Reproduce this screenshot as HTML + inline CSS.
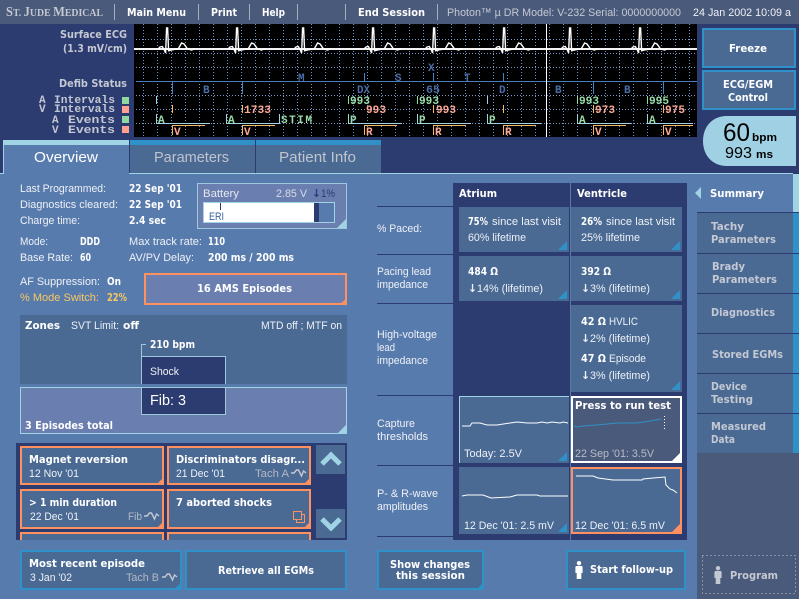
<!DOCTYPE html>
<html><head><meta charset="utf-8"><title>Photon DR</title>
<style>
html,body{margin:0;padding:0;background:#587bae;overflow:hidden}
svg{display:block}
text{font-family:"Liberation Sans",sans-serif;font-size:11px;fill:#eef1f6}
.b{font-family:"DejaVu Sans",sans-serif;font-size:11px;font-weight:bold;fill:#fff}
.g{fill:#c4c8d2}
.gb{font-family:"DejaVu Sans",sans-serif;font-size:11px;font-weight:bold;fill:#c4c8d2}
.l{font-family:"Liberation Mono",monospace;font-weight:bold;font-size:11px;fill:#c4c8d2}
.m{font-family:"Liberation Mono",monospace;font-weight:bold;font-size:11px}
.mb{fill:#4a6ea8}.mg{fill:#98dca8}.mp{fill:#ffa898}
.a{font-family:"DejaVu Sans",sans-serif;font-weight:bold}
rect,line{shape-rendering:crispEdges}
</style></head><body>
<svg xmlns="http://www.w3.org/2000/svg" width="799" height="599" viewBox="0 0 799 599">
<defs>
<pattern id="gv" x="143" y="24" width="14" height="3" patternUnits="userSpaceOnUse"><rect width="1" height="1" fill="#6f96cc"/></pattern>
<pattern id="gh" x="136" y="39" width="3" height="14" patternUnits="userSpaceOnUse"><rect width="1" height="1" fill="#7f9ac4"/></pattern>
<polyline id="beat" fill="none" stroke="#fff" stroke-width="1.4" points="-9,48.700 -7.300,47 -5,46.500 -3,50 -1.700,53 -0.700,28 0.300,28 1.300,50.700 4.300,50 11,48.700 14.300,43 16.700,44 20,48.700 24,50 28,48.700"/>
<polyline id="wave" fill="none" stroke-width="1.400" points="0,5 3,5 5.500,2 7.500,2 10.500,8 12.500,3 15,5"/>
<path id="person" d="M4 0a2.200 2.200 0 1 1-.01 0zM1 5h6l.6 1v6H6.300v6H1.700v-6H.4V6z"/>
</defs>
<rect width="799" height="599" fill="#587bae"/>
<!-- top bar -->
<rect width="799" height="24" fill="#4a5a7a"/>
<g fill="#a8aebc"><rect x="114" y="4" width="1" height="16"/><rect x="198" y="4" width="1" height="16"/><rect x="249" y="4" width="1" height="16"/><rect x="297" y="4" width="1" height="16"/><rect x="345" y="4" width="1" height="16"/><rect x="437" y="4" width="1" height="16"/></g>
<text x="6" y="16" textLength="97" lengthAdjust="spacingAndGlyphs" style="font-family:'Liberation Serif',serif;font-size:11px;font-weight:bold;fill:#c4c8d2"><tspan font-size="14">S</tspan>T. <tspan font-size="14">J</tspan>UDE <tspan font-size="14">M</tspan>EDICAL</text>
<text class="b" x="127" y="16" textLength="59" lengthAdjust="spacingAndGlyphs">Main Menu</text>
<text class="b" x="211" y="16" textLength="26" lengthAdjust="spacingAndGlyphs">Print</text>
<text class="b" x="262" y="16" textLength="23" lengthAdjust="spacingAndGlyphs">Help</text>
<text class="b" x="358" y="16" textLength="67" lengthAdjust="spacingAndGlyphs">End Session</text>
<text class="g" x="447" y="16" textLength="234" lengthAdjust="spacingAndGlyphs">Photon™ µ DR Model: V-232 Serial: 0000000000</text>
<text x="693" y="16" textLength="98" lengthAdjust="spacingAndGlyphs">24 Jan 2002 10:09 a</text>
<!-- band -->
<rect y="24" width="799" height="150" fill="#2d3c70"/>
<text class="gb" x="60" y="38" textLength="67" lengthAdjust="spacingAndGlyphs">Surface ECG</text>
<text class="gb" x="63" y="52" textLength="64" lengthAdjust="spacingAndGlyphs">(1.3 mV/cm)</text>
<text class="gb" x="59" y="87" textLength="68" lengthAdjust="spacingAndGlyphs">Defib Status</text>
<text class="l" x="39" y="103">A</text><text class="l" x="54" y="103" textLength="61" lengthAdjust="spacingAndGlyphs">Intervals</text>
<text class="l" x="39" y="112">V</text><text class="l" x="54" y="112" textLength="61" lengthAdjust="spacingAndGlyphs">Intervals</text>
<text class="l" x="52" y="123">A</text><text class="l" x="68" y="123" textLength="47" lengthAdjust="spacingAndGlyphs">Events</text>
<text class="l" x="52" y="133">V</text><text class="l" x="68" y="133" textLength="47" lengthAdjust="spacingAndGlyphs">Events</text>
<rect x="122" y="97" width="7" height="7" fill="#90d8a0"/><rect x="122" y="106" width="7" height="7" fill="#ffa090"/><rect x="122" y="116" width="7" height="7" fill="#90d8a0"/><rect x="122" y="126" width="7" height="7" fill="#ffa090"/>
<!-- ECG panel -->
<rect x="134" y="24" width="563" height="113" fill="#000"/>
<rect x="136" y="30" width="561" height="107" fill="url(#gh)"/>
<rect x="136" y="24" width="561" height="113" fill="url(#gv)"/>
<rect x="134" y="48" width="563" height="2" fill="#fff" opacity=".95"/>
<use href="#beat" x="167.300"/><use href="#beat" x="237.300"/><use href="#beat" x="303.300"/><use href="#beat" x="373.300"/><use href="#beat" x="434.300"/><use href="#beat" x="504.300"/><use href="#beat" x="570.300"/><use href="#beat" x="640.300"/>
<rect x="136" y="81" width="561" height="1" fill="#4a80c0"/>
<g fill="#3f86c8"><rect x="364" y="73" width="1" height="9"/><rect x="433" y="73" width="1" height="9"/><rect x="503" y="73" width="1" height="9"/><rect x="172" y="82" width="1" height="12"/><rect x="242" y="82" width="1" height="12"/><rect x="593" y="82" width="1" height="12"/><rect x="663" y="82" width="1" height="12"/></g>
<rect x="546" y="24" width="1" height="113" fill="#fff"/>
<g>
<text class="m mb" x="298" y="81">M</text><text class="m mb" x="395" y="81">S</text><text class="m mb" x="428" y="71">X</text><text class="m mb" x="464" y="81">T</text>
<text class="m mb" x="203" y="93">B</text><text class="m mb" x="357" y="93" textLength="13" lengthAdjust="spacingAndGlyphs">DX</text><text class="m mb" x="426" y="93" textLength="14" lengthAdjust="spacingAndGlyphs">65</text><text class="m mb" x="499" y="93">D</text><text class="m mb" x="555" y="93">B</text><text class="m mb" x="624" y="93">B</text>
<text class="m mg" x="350" y="104" textLength="20" lengthAdjust="spacingAndGlyphs">993</text><text class="m mg" x="419" y="104" textLength="20" lengthAdjust="spacingAndGlyphs">993</text><text class="m mg" x="579" y="104" textLength="20" lengthAdjust="spacingAndGlyphs">993</text><text class="m mg" x="649" y="104" textLength="20" lengthAdjust="spacingAndGlyphs">995</text>
<text class="m mp" x="244" y="113" textLength="27" lengthAdjust="spacingAndGlyphs">1733</text><text class="m mp" x="366" y="113" textLength="20" lengthAdjust="spacingAndGlyphs">993</text><text class="m mp" x="436" y="113" textLength="20" lengthAdjust="spacingAndGlyphs">993</text><text class="m mp" x="595" y="113" textLength="20" lengthAdjust="spacingAndGlyphs">973</text><text class="m mp" x="665" y="113" textLength="20" lengthAdjust="spacingAndGlyphs">975</text>
<text class="m mg" x="158" y="123">A</text><text class="m mg" x="228" y="123">A</text><text class="m mg" x="281" y="123" textLength="31" lengthAdjust="spacing">STIM</text><text class="m mg" x="350" y="123">P</text><text class="m mg" x="419" y="123">P</text><text class="m mg" x="489" y="123">P</text><text class="m mg" x="579" y="123">A</text><text class="m mg" x="649" y="123">A</text>
<text class="m mp" x="174" y="135">V</text><text class="m mp" x="244" y="135">V</text><text class="m mp" x="366" y="135">R</text><text class="m mp" x="435" y="135">R</text><text class="m mp" x="505" y="135">R</text><text class="m mp" x="595" y="135">V</text><text class="m mp" x="665" y="135">V</text>
</g>
<g fill="#a0d4e4">
<rect x="156" y="96" width="1" height="8"/><rect x="487" y="96" width="1" height="8"/>
<rect x="156" y="114" width="1" height="9"/><rect x="156" y="123" width="54" height="1"/>
<rect x="226" y="114" width="1" height="9"/><rect x="226" y="123" width="54" height="1"/><rect x="279" y="114" width="1" height="9"/>
<rect x="348" y="114" width="1" height="9"/><rect x="348" y="123" width="54" height="1"/>
<rect x="417" y="114" width="1" height="9"/><rect x="417" y="123" width="54" height="1"/>
<rect x="487" y="114" width="1" height="9"/><rect x="487" y="123" width="54" height="1"/>
<rect x="577" y="114" width="1" height="9"/><rect x="577" y="123" width="54" height="1"/>
<rect x="647" y="114" width="1" height="9"/><rect x="647" y="123" width="46" height="1"/>
</g>
<g fill="#90d8a0"><rect x="348" y="96" width="1" height="8"/><rect x="417" y="96" width="1" height="8"/><rect x="577" y="96" width="1" height="8"/><rect x="647" y="96" width="1" height="8"/></g>
<g fill="#f8b860">
<rect x="172" y="105" width="1" height="8"/><rect x="503" y="105" width="1" height="8"/>
<rect x="242" y="105" width="1" height="8"/><rect x="433" y="105" width="1" height="8"/><rect x="593" y="105" width="1" height="8"/><rect x="663" y="105" width="1" height="8"/>
<rect x="172" y="125" width="1" height="10"/><rect x="172" y="125" width="33" height="1"/>
<rect x="242" y="125" width="1" height="10"/><rect x="242" y="125" width="33" height="1"/>
<rect x="364" y="125" width="1" height="10"/><rect x="364" y="125" width="33" height="1"/>
<rect x="433" y="125" width="1" height="10"/><rect x="433" y="125" width="33" height="1"/>
<rect x="503" y="125" width="1" height="10"/><rect x="503" y="125" width="33" height="1"/>
<rect x="593" y="125" width="1" height="10"/><rect x="593" y="125" width="33" height="1"/>
<rect x="663" y="125" width="1" height="10"/><rect x="663" y="125" width="30" height="1"/>
</g>
<!-- Right controls -->
<rect x="703" y="29" width="92" height="38" fill="#4a6a94" stroke="#3090c8" stroke-width="2"/>
<text class="b" x="729" y="52" textLength="38" lengthAdjust="spacingAndGlyphs">Freeze</text>
<rect x="703" y="71" width="92" height="38" fill="#4a6a94" stroke="#3090c8" stroke-width="2"/>
<text class="b" x="723" y="88" textLength="50" lengthAdjust="spacingAndGlyphs">ECG/EGM</text>
<text class="b" x="728" y="101" textLength="40" lengthAdjust="spacingAndGlyphs">Control</text>
<path d="M727 116H796V166H727C712 166 703 155 703 141C703 127 712 116 727 116Z" fill="#a0d0e4"/>
<text x="723" y="141" textLength="27" lengthAdjust="spacingAndGlyphs" style="font-size:25px;fill:#000">60</text>
<text x="752" y="141" textLength="25" lengthAdjust="spacingAndGlyphs" style="font-size:11px;font-weight:bold;fill:#000">bpm</text>
<text x="725" y="158" textLength="27" lengthAdjust="spacingAndGlyphs" style="font-size:16px;fill:#000">993</text>
<text x="756" y="158" textLength="17" lengthAdjust="spacingAndGlyphs" style="font-size:11px;font-weight:bold;fill:#000">ms</text>
<!-- Tabs -->
<rect x="0" y="173" width="793" height="1" fill="#a0d4e4"/>
<rect x="3" y="140" width="126" height="34" fill="#587bae"/>
<rect x="3" y="140" width="126" height="5" fill="#a0d4e4"/>
<rect x="3" y="145" width="1" height="29" fill="#a0d4e4"/>
<rect x="130" y="140" width="125" height="33" fill="#4a6a94"/><rect x="130" y="140" width="125" height="5" fill="#3090c8"/>
<rect x="256" y="140" width="125" height="33" fill="#4a6a94"/><rect x="256" y="140" width="125" height="5" fill="#3090c8"/>
<text x="34" y="162" textLength="64" lengthAdjust="spacingAndGlyphs" style="font-size:14.500px;fill:#fff">Overview</text>
<text x="154" y="162" textLength="75" lengthAdjust="spacingAndGlyphs" style="font-size:14.500px;fill:#c0c4cc">Parameters</text>
<text x="279" y="162" textLength="77" lengthAdjust="spacingAndGlyphs" style="font-size:14.500px;fill:#c0c4cc">Patient Info</text>
<!-- Summary text -->
<text x="20" y="192" textLength="86" lengthAdjust="spacingAndGlyphs">Last Programmed:</text><text class="b" x="129" y="192" textLength="53" lengthAdjust="spacingAndGlyphs">22 Sep '01</text>
<text x="20" y="208" textLength="98" lengthAdjust="spacingAndGlyphs">Diagnostics cleared:</text><text class="b" x="129" y="208" textLength="53" lengthAdjust="spacingAndGlyphs">22 Sep '01</text>
<text x="20" y="224" textLength="60" lengthAdjust="spacingAndGlyphs">Charge time:</text><text class="b" x="129" y="224" textLength="37" lengthAdjust="spacingAndGlyphs">2.4 sec</text>
<text x="20" y="245" textLength="28" lengthAdjust="spacingAndGlyphs">Mode:</text><text class="b" x="80" y="245" textLength="20" lengthAdjust="spacingAndGlyphs">DDD</text>
<text x="129" y="245" textLength="73" lengthAdjust="spacingAndGlyphs">Max track rate:</text><text class="b" x="208" y="245" textLength="17" lengthAdjust="spacingAndGlyphs">110</text>
<text x="20" y="261" textLength="53" lengthAdjust="spacingAndGlyphs">Base Rate:</text><text class="b" x="80" y="261" textLength="11" lengthAdjust="spacingAndGlyphs">60</text>
<text x="129" y="261" textLength="65" lengthAdjust="spacingAndGlyphs">AV/PV Delay:</text><text class="b" x="208" y="261" textLength="86" lengthAdjust="spacingAndGlyphs">200 ms / 200 ms</text>
<text x="20" y="285" textLength="80" lengthAdjust="spacingAndGlyphs">AF Suppression:</text><text class="b" x="107" y="285" textLength="14" lengthAdjust="spacingAndGlyphs">On</text>
<text x="20" y="301" textLength="79" lengthAdjust="spacingAndGlyphs" style="fill:#f8c860">% Mode Switch:</text><text class="b" x="107" y="301" textLength="20" lengthAdjust="spacingAndGlyphs" style="fill:#f8c860">22%</text>
<!-- Battery -->
<rect x="197.500" y="183.500" width="149" height="45" fill="#6a7eb0" stroke="#a0c8dc"/>
<path d="M346 219v9h-9z" fill="#a0d4e4"/>
<text x="203" y="197" textLength="36" lengthAdjust="spacingAndGlyphs" style="fill:#e4e8f0">Battery</text>
<text x="276" y="197" textLength="31" lengthAdjust="spacingAndGlyphs" style="fill:#d8dce8">2.85 V</text>
<text class="a" x="312" y="197" textLength="9" lengthAdjust="spacingAndGlyphs" style="fill:#2d3c70;font-size:11px">↓</text>
<text x="321" y="197" textLength="14" lengthAdjust="spacingAndGlyphs" style="fill:#2d3c70">1%</text>
<rect x="203.500" y="202.500" width="131" height="20" fill="#587bae" stroke="#a0d4e4"/>
<rect x="204" y="203" width="110" height="19" fill="#fff"/><rect x="314" y="203" width="5" height="19" fill="#2d3c70"/>
<rect x="220" y="203" width="1" height="7" fill="#2d3c70"/>
<text x="209" y="220" textLength="15" lengthAdjust="spacingAndGlyphs" style="fill:#3a62a0">ERI</text>
<!-- AMS -->
<rect x="145" y="274" width="201" height="30" fill="#6a7eb0" stroke="#ff9060" stroke-width="2"/>
<path d="M346 299v5h-6z" fill="#ff9060"/>
<text class="b" x="197" y="292" textLength="95" lengthAdjust="spacingAndGlyphs">16 AMS Episodes</text>
<!-- Zones -->
<rect x="20" y="315" width="327" height="69" fill="#4a6a94"/>
<text class="b" x="25" y="329" textLength="35" lengthAdjust="spacingAndGlyphs">Zones</text>
<text x="71" y="329" textLength="48" lengthAdjust="spacingAndGlyphs">SVT Limit:</text><text class="b" x="123" y="329" textLength="16" lengthAdjust="spacingAndGlyphs">off</text>
<text x="261" y="329" textLength="81" lengthAdjust="spacingAndGlyphs">MTD off ; MTF on</text>
<text class="b" x="150" y="348" textLength="45" lengthAdjust="spacingAndGlyphs">210 bpm</text>
<rect x="142" y="344" width="4" height="1" fill="#a0c8dc"/><rect x="141" y="344" width="1" height="12" fill="#a0c8dc"/>
<rect x="20.500" y="387.500" width="326" height="46" fill="#6a7eb0" stroke="#a0d4e4"/>
<path d="M346 425v8h-8z" fill="#a0d4e4"/>
<rect x="141.500" y="356.500" width="84" height="28" fill="#2d3c70" stroke="#a0c8dc"/>
<rect x="141" y="384" width="85" height="3" fill="#587bae"/>
<rect x="141.500" y="387.500" width="84" height="27" fill="#2d3c70" stroke="#a0c8dc"/>
<text x="150" y="375" textLength="29" lengthAdjust="spacingAndGlyphs">Shock</text>
<text x="150" y="405" textLength="36" lengthAdjust="spacingAndGlyphs" style="font-size:15px;fill:#fff">Fib: 3</text>
<text class="b" x="25" y="429" textLength="88" lengthAdjust="spacingAndGlyphs">3 Episodes total</text>
<!-- Episode list -->
<rect x="16" y="443" width="331" height="97" fill="#2d3c70"/>
<g fill="#4a6a94" stroke="#ff9060" stroke-width="2">
<rect x="21" y="447" width="142" height="37"/><rect x="168" y="447" width="142" height="37"/>
<rect x="21" y="490" width="142" height="38"/><rect x="168" y="490" width="142" height="38"/>
</g>
<rect x="20" y="532" width="144" height="8" fill="#ff9060"/><rect x="22" y="534" width="140" height="6" fill="#4a6a94"/>
<rect x="167" y="532" width="144" height="8" fill="#ff9060"/><rect x="169" y="534" width="140" height="6" fill="#4a6a94"/>
<g fill="#ff9060"><path d="M163 478v6h-6z"/><path d="M310 478v6h-6z"/><path d="M163 522v6h-6z"/><path d="M310 522v6h-6z"/></g>
<text class="b" x="29" y="463" textLength="99" lengthAdjust="spacingAndGlyphs">Magnet reversion</text><text x="29" y="477" textLength="50" lengthAdjust="spacingAndGlyphs">12 Nov '01</text>
<text class="b" x="176" y="463" textLength="129" lengthAdjust="spacingAndGlyphs">Discriminators disagr...</text><text x="176" y="477" textLength="49" lengthAdjust="spacingAndGlyphs">21 Dec '01</text>
<text x="255" y="477" textLength="34" lengthAdjust="spacingAndGlyphs" style="fill:#b4b8c4">Tach A</text><use href="#wave" x="291" y="468" stroke="#c4c8d2"/>
<text class="b" x="29" y="506" textLength="88" lengthAdjust="spacingAndGlyphs">&gt; 1 min duration</text><text x="30" y="520" textLength="49" lengthAdjust="spacingAndGlyphs">22 Dec '01</text>
<text x="128" y="520" textLength="14" lengthAdjust="spacingAndGlyphs" style="fill:#b4b8c4">Fib</text><use href="#wave" x="144" y="511" stroke="#c4c8d2"/>
<text class="b" x="176" y="506" textLength="96" lengthAdjust="spacingAndGlyphs">7 aborted shocks</text>
<g fill="none" stroke="#ff9060"><rect x="293.500" y="511.500" width="8" height="8"/><path d="M301.500 514.500h3v8h-8v-3"/></g>
<rect x="316" y="445" width="29" height="29" fill="#4a6a94"/><rect x="316" y="509" width="29" height="29" fill="#4a6a94"/>
<path d="M322 464l9-9 9 9" fill="none" stroke="#a0d4e4" stroke-width="5"/>
<path d="M322 519l9 9 9-9" fill="none" stroke="#a0d4e4" stroke-width="5"/>
<!-- bottom left buttons -->
<rect x="21" y="551" width="160" height="38" fill="#4a6a94" stroke="#3090c8" stroke-width="2"/><path d="M181 583v6h-7z" fill="#3090c8"/>
<text class="b" x="29" y="567" textLength="116" lengthAdjust="spacingAndGlyphs">Most recent episode</text><text x="30" y="581" textLength="42" lengthAdjust="spacingAndGlyphs">3 Jan '02</text>
<text x="126" y="581" textLength="33" lengthAdjust="spacingAndGlyphs" style="fill:#b4b8c4">Tach B</text><use href="#wave" x="162" y="572" stroke="#c4c8d2"/>
<rect x="186" y="551" width="160" height="38" fill="#4a6a94" stroke="#3090c8" stroke-width="2"/>
<text class="b" x="218" y="574" textLength="96" lengthAdjust="spacingAndGlyphs">Retrieve all EGMs</text>
<!-- Table -->
<rect x="453" y="183" width="234" height="357" fill="#2d3c70"/>
<rect x="570" y="183" width="1" height="357" fill="#587bae"/>
<text class="b" x="459" y="197" textLength="38" lengthAdjust="spacingAndGlyphs">Atrium</text><text class="b" x="577" y="197" textLength="50" lengthAdjust="spacingAndGlyphs">Ventricle</text>
<g fill="#2d3c70"><rect x="377" y="206" width="76" height="1"/><rect x="377" y="254" width="76" height="1"/><rect x="377" y="303" width="76" height="1"/><rect x="377" y="395" width="76" height="1"/><rect x="377" y="465" width="76" height="1"/><rect x="377" y="536" width="76" height="1"/></g>
<g fill="#4a6a94">
<rect x="459" y="207" width="110" height="45"/><rect x="571" y="207" width="111" height="45"/>
<rect x="459" y="256" width="110" height="45"/><rect x="571" y="256" width="111" height="45"/>
<rect x="571" y="305" width="111" height="87"/>
<rect x="459" y="396" width="110" height="67"/>
<rect x="459" y="467" width="110" height="67"/>
<rect x="572" y="468" width="109" height="65" stroke="#ff9060" stroke-width="2"/>
</g>
<rect x="459" y="396" width="110" height="1" fill="#a0d4e4"/><rect x="459" y="396" width="1" height="67" fill="#a0d4e4"/>
<rect x="572" y="397" width="109" height="65" fill="#4a5a7a" stroke="#fff" stroke-width="2"/>
<g fill="#3090c8">
<path d="M567 241v9h-9z"/><path d="M680 241v9h-9z"/><path d="M567 290v9h-9z"/><path d="M680 290v9h-9z"/><path d="M680 381v9h-9z"/>
<path d="M567 452v9h-9z"/><path d="M567 523v9h-9z"/>
</g>
<path d="M681 452v10h-10z" fill="#fff"/><path d="M681 523v10h-10z" fill="#ff9060"/>
<text x="377" y="232" textLength="45" lengthAdjust="spacingAndGlyphs">% Paced:</text>
<text class="b" x="468" y="225" textLength="20" lengthAdjust="spacingAndGlyphs">75%</text><text x="492" y="225" textLength="69" lengthAdjust="spacingAndGlyphs">since last visit</text><text x="468" y="241" textLength="58" lengthAdjust="spacingAndGlyphs">60% lifetime</text>
<text class="b" x="581" y="225" textLength="21" lengthAdjust="spacingAndGlyphs">26%</text><text x="606" y="225" textLength="69" lengthAdjust="spacingAndGlyphs">since last visit</text><text x="581" y="241" textLength="59" lengthAdjust="spacingAndGlyphs">25% lifetime</text>
<text x="377" y="275" textLength="54" lengthAdjust="spacingAndGlyphs">Pacing lead</text><text x="377" y="288" textLength="51" lengthAdjust="spacingAndGlyphs">impedance</text>
<text class="b" x="468" y="275" textLength="30" lengthAdjust="spacingAndGlyphs">484 Ω</text><text x="468" y="292" textLength="75" lengthAdjust="spacingAndGlyphs"><tspan class="a">↓</tspan>14% (lifetime)</text>
<text class="b" x="581" y="275" textLength="30" lengthAdjust="spacingAndGlyphs">392 Ω</text><text x="581" y="292" textLength="69" lengthAdjust="spacingAndGlyphs"><tspan class="a">↓</tspan>3% (lifetime)</text>
<text x="377" y="338" textLength="60" lengthAdjust="spacingAndGlyphs">High-voltage</text><text x="377" y="351" textLength="18" lengthAdjust="spacingAndGlyphs">lead</text><text x="377" y="364" textLength="51" lengthAdjust="spacingAndGlyphs">impedance</text>
<text class="b" x="581" y="325" textLength="25" lengthAdjust="spacingAndGlyphs">42 Ω</text><text x="609" y="325" textLength="29" lengthAdjust="spacingAndGlyphs">HVLIC</text><text x="581" y="342" textLength="69" lengthAdjust="spacingAndGlyphs"><tspan class="a">↓</tspan>2% (lifetime)</text>
<text class="b" x="581" y="362" textLength="25" lengthAdjust="spacingAndGlyphs">47 Ω</text><text x="609" y="362" textLength="37" lengthAdjust="spacingAndGlyphs">Episode</text><text x="581" y="379" textLength="69" lengthAdjust="spacingAndGlyphs"><tspan class="a">↓</tspan>3% (lifetime)</text>
<text x="377" y="427" textLength="38" lengthAdjust="spacingAndGlyphs">Capture</text><text x="377" y="440" textLength="51" lengthAdjust="spacingAndGlyphs">thresholds</text>
<text x="464" y="457" textLength="58" lengthAdjust="spacingAndGlyphs">Today: 2.5V</text>
<text class="b" x="575" y="409" textLength="96" lengthAdjust="spacingAndGlyphs">Press to run test</text>
<text x="575" y="457" textLength="79" lengthAdjust="spacingAndGlyphs" style="fill:#b8bcc8">22 Sep '01: 3.5V</text>
<text x="377" y="497" textLength="61" lengthAdjust="spacingAndGlyphs">P- &amp; R-wave</text><text x="377" y="510" textLength="51" lengthAdjust="spacingAndGlyphs">amplitudes</text>
<text x="464" y="529" textLength="90" lengthAdjust="spacingAndGlyphs">12 Dec '01: 2.5 mV</text><text x="575" y="529" textLength="90" lengthAdjust="spacingAndGlyphs">12 Dec '01: 6.5 mV</text>
<polyline fill="none" stroke="#fff" stroke-width="1" points="462,426 470,426 472,423 480,423 487,425 497,425 510,423 517,422 527,423 537,423 542,422 547,423 552,422 560,423 563,422 568,423"/>
<polyline fill="none" stroke="#3090c8" stroke-width="1" points="574,426 578,427 583,426 597,425 617,423 637,423 650,421 661,419"/>
<line x1="664.500" y1="416" x2="664.500" y2="430" stroke="#fff" stroke-dasharray="1 2"/>
<polyline fill="none" stroke="#fff" stroke-width="1" points="462,496 467,495 483,495 491,498 510,497 517,495 537,495 540,496 568,496"/>
<polyline fill="none" stroke="#fff" stroke-width="1" points="576,476 593,476 598,478 613,480 642,480 643,479 653,478 665,477 666,485 670,489 673,490 677,493"/>
<!-- bottom mid -->
<rect x="378" y="551" width="105" height="38" fill="#4a6a94" stroke="#3090c8" stroke-width="2"/><path d="M483 583v6h-6z" fill="#3090c8"/>
<text class="b" x="390" y="568" textLength="80" lengthAdjust="spacingAndGlyphs">Show changes</text><text class="b" x="396" y="579" textLength="69" lengthAdjust="spacingAndGlyphs">this session</text>
<rect x="567" y="551" width="118" height="38" fill="#4a6a94" stroke="#3090c8" stroke-width="2"/>
<use href="#person" x="575" y="561" fill="#fff"/>
<text class="b" x="590" y="573" textLength="83" lengthAdjust="spacingAndGlyphs">Start follow-up</text>
<!-- right nav -->
<rect x="793" y="174" width="6" height="38" fill="#a0d4e4"/>
<rect x="697" y="212" width="96" height="241" fill="#4a6a94"/><rect x="793" y="212" width="6" height="241" fill="#3090c8"/>
<g fill="#2d3c70"><rect x="697" y="212" width="102" height="1"/><rect x="697" y="253" width="102" height="1"/><rect x="697" y="293" width="102" height="1"/><rect x="697" y="333" width="102" height="1"/><rect x="697" y="373" width="102" height="1"/><rect x="697" y="413" width="102" height="1"/></g>
<rect x="697" y="453" width="102" height="146" fill="#4a5a7a"/>
<path d="M701 187v12l-6-6z" fill="#a0d4e4"/>
<text class="b" x="710" y="197" textLength="54" lengthAdjust="spacingAndGlyphs">Summary</text>
<text class="gb" x="711" y="230" textLength="33" lengthAdjust="spacingAndGlyphs">Tachy</text><text class="gb" x="711" y="243" textLength="65" lengthAdjust="spacingAndGlyphs">Parameters</text>
<text class="gb" x="712" y="270" textLength="33" lengthAdjust="spacingAndGlyphs">Brady</text><text class="gb" x="712" y="283" textLength="65" lengthAdjust="spacingAndGlyphs">Parameters</text>
<text class="gb" x="711" y="316" textLength="64" lengthAdjust="spacingAndGlyphs">Diagnostics</text>
<text class="gb" x="712" y="358" textLength="71" lengthAdjust="spacingAndGlyphs">Stored EGMs</text>
<text class="gb" x="711" y="390" textLength="36" lengthAdjust="spacingAndGlyphs">Device</text><text class="gb" x="711" y="403" textLength="42" lengthAdjust="spacingAndGlyphs">Testing</text>
<text class="gb" x="711" y="430" textLength="55" lengthAdjust="spacingAndGlyphs">Measured</text><text class="gb" x="711" y="443" textLength="24" lengthAdjust="spacingAndGlyphs">Data</text>
<rect x="702.500" y="555.500" width="93" height="38" fill="none" stroke="#c4c8d2" stroke-dasharray="1 3" style="shape-rendering:crispEdges"/>
<use href="#person" x="714" y="566" fill="#c4c8d2"/>
<text class="gb" x="730" y="579" textLength="48" lengthAdjust="spacingAndGlyphs">Program</text>
</svg>
</body></html>
